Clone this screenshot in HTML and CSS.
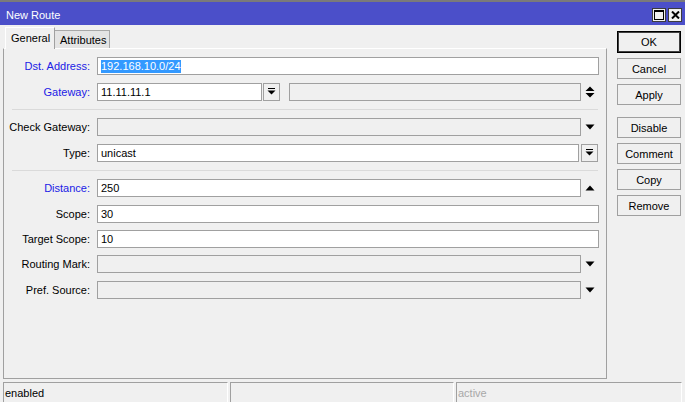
FILE: index.html
```html
<!DOCTYPE html>
<html>
<head>
<meta charset="utf-8">
<link rel="stylesheet" href="styles.css">
</head>
<body>
<div class="win">
  <div class="titlebar">
    <span class="title">New Route</span>
    <div class="tbtns">
      <span class="tbtn"><svg width="10" height="10" viewBox="0 0 10 10"><rect x="0.5" y="0.5" width="9" height="9" fill="none" stroke="#000"/><rect x="0" y="0" width="10" height="2" fill="#000"/></svg></span>
      <span class="tbtn"><svg width="9" height="8" viewBox="0 0 9 8"><path d="M1 0.5 L8 7.5 M8 0.5 L1 7.5" stroke="#000" stroke-width="2"/></svg></span>
    </div>
  </div>
  <div class="main">
    <div class="left">
      <div class="tabs">
        <div class="tab active">General</div>
        <div class="tab">Attributes</div>
      </div>
      <div class="panel">
        <div class="row">
          <span class="lbl blue">Dst. Address:</span>
          <div class="inp full"><span class="sel">192.168.10.0/24</span></div>
        </div>
        <div class="row">
          <span class="lbl blue">Gateway:</span>
          <div class="inp gw">11.11.11.1</div>
          <div class="sbtn"><svg width="9" height="8" viewBox="0 0 9 8"><rect x="1" y="0" width="7" height="1" fill="#000"/><path d="M0.5 2.5 H8.5 L4.5 6.5 Z" fill="#000"/></svg></div>
          <div class="inp dis gw2"></div>
          <div class="arr"><svg width="10" height="12" viewBox="0 0 10 12"><path d="M0.5 5 L9.5 5 L5 0.5 Z M0.5 7 L9.5 7 L5 11.5 Z" fill="#000"/></svg></div>
        </div>
        <div class="sep"></div>
        <div class="row">
          <span class="lbl">Check Gateway:</span>
          <div class="inp dis wa"></div>
          <div class="arr"><svg width="10" height="6" viewBox="0 0 10 6"><path d="M0.5 0.5 H9.5 L5 5.5 Z" fill="#000"/></svg></div>
        </div>
        <div class="row">
          <span class="lbl">Type:</span>
          <div class="inp wb">unicast</div>
          <div class="sbtn tb"><svg width="9" height="8" viewBox="0 0 9 8"><rect x="1" y="0" width="7" height="1" fill="#000"/><path d="M0.5 2.5 H8.5 L4.5 6.5 Z" fill="#000"/></svg></div>
        </div>
        <div class="sep"></div>
        <div class="row">
          <span class="lbl blue">Distance:</span>
          <div class="inp wa">250</div>
          <div class="arr"><svg width="10" height="6" viewBox="0 0 10 6"><path d="M0.5 5.5 H9.5 L5 0.5 Z" fill="#000"/></svg></div>
        </div>
        <div class="row tight">
          <span class="lbl">Scope:</span>
          <div class="inp full">30</div>
        </div>
        <div class="row tight">
          <span class="lbl">Target Scope:</span>
          <div class="inp full">10</div>
        </div>
        <div class="row">
          <span class="lbl">Routing Mark:</span>
          <div class="inp dis wa"></div>
          <div class="arr"><svg width="10" height="6" viewBox="0 0 10 6"><path d="M0.5 0.5 H9.5 L5 5.5 Z" fill="#000"/></svg></div>
        </div>
        <div class="row">
          <span class="lbl">Pref. Source:</span>
          <div class="inp dis wa"></div>
          <div class="arr"><svg width="10" height="6" viewBox="0 0 10 6"><path d="M0.5 0.5 H9.5 L5 5.5 Z" fill="#000"/></svg></div>
        </div>
      </div>
    </div>
    <div class="side">
      <div class="btn ok">OK</div>
      <div class="btn">Cancel</div>
      <div class="btn">Apply</div>
      <div class="btn gapped">Disable</div>
      <div class="btn">Comment</div>
      <div class="btn">Copy</div>
      <div class="btn">Remove</div>
    </div>
  </div>
  <div class="status">
    <div class="cell c1">enabled</div>
    <div class="cell c2"></div>
    <div class="cell c3 dim">active</div>
  </div>
</div>
</body>
</html>
```

FILE: styles.css
```css
* { box-sizing: border-box; }
html, body { margin: 0; padding: 0; }
body {
  width: 685px;
  height: 402px;
  overflow: hidden;
  background: #f0f0f0;
  font: 11px "Liberation Sans", Arial, sans-serif;
  color: #000;
}
.win {
  height: 402px;
  border-top: 2px solid #7a7a7a;
  display: flex;
  flex-direction: column;
}
.titlebar {
  height: 23px;
  flex: none;
  background: #4b4fc9;
  color: #fff;
  display: flex;
  align-items: center;
  justify-content: space-between;
  padding: 3px 3px 0 6px;
}
.title { line-height: 14px; }
.tbtns { display: flex; gap: 2px; }
.tbtn {
  width: 14px;
  height: 14px;
  background: #f0f0f0;
  border: 1px solid #3c3c3c;
  display: flex;
  align-items: center;
  justify-content: center;
}
.main {
  height: 355px;
  flex: none;
  display: flex;
}
.left {
  width: 607px;
  flex: none;
  padding-left: 3px;
  display: flex;
  flex-direction: column;
}
.tabs {
  height: 23px;
  flex: none;
  display: flex;
  align-items: flex-end;
  padding-left: 2px;
}
.tab {
  height: 18px;
  padding: 0 5px;
  display: flex;
  align-items: center;
  background: #e4e4e4;
  border: 1px solid #a8a8a8;
  border-bottom: none;
  border-left: none;
  width: 55px;
}
.tab.active {
  height: 22px;
  width: 50px;
  margin-bottom: -1px;
  position: relative;
  z-index: 1;
  background: #f0f0f0;
  border-top: 1px solid #fff;
  border-left: 1px solid #fff;
  border-right: 1px solid #a0a0a0;
  padding: 0 0 1px 5px;
}
.panel {
  flex: 1;
  border: 1px solid #a0a0a0;
  border-top-color: #fff;
  padding-top: 8px;
  margin-bottom: 1px;
}
.row {
  height: 18px;
  display: flex;
  align-items: center;
  margin-bottom: 8px;
}
.row.tight { margin-bottom: 7px; }
.lbl {
  width: 86px;
  margin-right: 7px;
  text-align: right;
  flex: none;
}
.blue { color: #2020e6; }
.inp {
  height: 18px;
  background: #fff;
  border: 1px solid #a0a0a0;
  padding-left: 3px;
  display: flex;
  align-items: center;
  white-space: nowrap;
  flex: none;
}
.inp.dis { background: #f0f0f0; }
.full { width: 502px; }
.wa { width: 484px; }
.wb { width: 482px; }
.gw { width: 165px; }
.gw2 { width: 292px; margin-left: 9px; }
.sel {
  background: #3399ff;
  color: #fff;
  line-height: 13px;
}
.sbtn {
  width: 17px;
  height: 18px;
  border: 1px solid #a0a0a0;
  background: #f0f0f0;
  display: flex;
  align-items: center;
  justify-content: center;
  flex: none;
  margin-left: 1px;
}
.sbtn.tb { margin-left: 2px; }
.arr {
  width: 18px;
  height: 18px;
  display: flex;
  align-items: center;
  justify-content: center;
  flex: none;
}
.sep {
  height: 1px;
  background: #dadada;
  margin: 1px 8px 8px 8px;
}
.side {
  flex: 1;
  padding: 6px 0 0 10px;
  display: flex;
  flex-direction: column;
  gap: 5px;
}
.btn {
  width: 64px;
  height: 21px;
  border: 1px solid #a0a0a0;
  background: #f0f0f0;
  display: flex;
  align-items: center;
  justify-content: center;
}
.btn.ok {
  border: 1px solid #000;
  box-shadow: inset 0 0 0 1px #404040;
  height: 22px;
}
.btn.gapped { margin-top: 7px; }
.status {
  flex: 1;
  display: flex;
  padding: 2px 3px 0 3px;
  gap: 2px;
}
.cell {
  height: 20px;
  border-top: 1px solid #a0a0a0;
  border-left: 1px solid #a0a0a0;
  border-right: 1px solid #fff;
  display: flex;
  align-items: center;
  padding-left: 1px;
}
.c1 { width: 225px; }
.c2 { width: 224px; }
.c3 { flex: 1; }
.dim { color: #a8a8a8; }
```
